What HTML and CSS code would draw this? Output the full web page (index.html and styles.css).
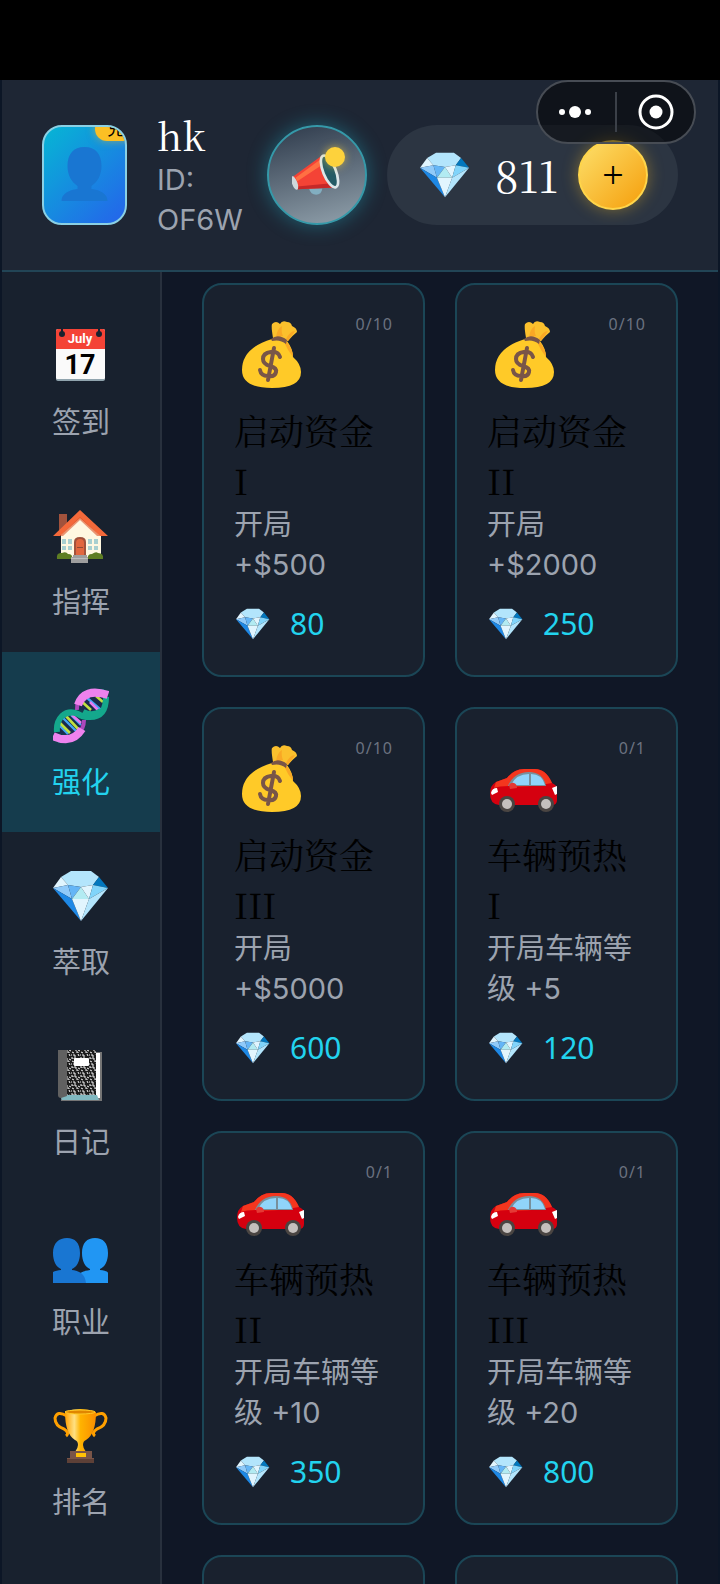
FILE: index.html
```html
<!DOCTYPE html>
<html lang="zh-CN">
<head>
  <meta charset="UTF-8">
  <meta name="viewport" content="width=device-width, initial-scale=1.0">
  <title>强化</title>
  <link rel="stylesheet" href="styles.css">
</head>
<body>
  <svg class="sprite" aria-hidden="true">
    <symbol id="diamond" viewBox="0 0 56 56">
      <path fill="#b3e5fc" d="M18 3h20l8 6-6 8-12 2-13-2-7-8z"/>
      <path fill="#e1f5fe" d="M8 9l7 8-15 3z"/>
      <path fill="#0277bd" d="M46 9l9 11-15-3z"/>
      <path fill="#90caf9" d="M0 20l15-3 4 14z"/>
      <path fill="#64b5f6" d="M15 17l13 2-9 12z"/>
      <path fill="#b2ebf2" d="M28 19l8 12H19z"/>
      <path fill="#e1f5fe" d="M28 19l12-2-4 14z"/>
      <path fill="#81d4fa" d="M40 17l15 3-19 11z"/>
      <path fill="#1e88e5" d="M0 20l19 11 9 22z"/>
      <path fill="#e1f5fe" d="M19 31h17l-8 22z"/>
      <path fill="#b3e5fc" d="M55 20L36 31l-8 22z"/>
    </symbol>
    <symbol id="moneybag" viewBox="-2 0 72 72">
      <path fill="#fbc02d" d="M37 19q-2-12-1-14 4-4 8 0 2-4 7-2 4 0 5 4 5 2 5 6-5 4-9 9z"/>
      <path fill="#f9a825" d="M40 18q1-8 6-11-1 6 1 10M50 20q4-8 9-8l-7 10z"/>
      <path fill="#ffca28" d="M36 20l15 2q6 8 6 16 8 7 8 15 0 16-29 16Q6 69 6 51q0-22 30-31z"/>
      <path fill="#f9a825" d="M50 22q7 8 7 16-5-6-9-15z"/>
      <path fill="#795548" d="M35 20q7-6 16 1l-1 4q-6-5-14-3z"/>
      <path d="M44 38q-2-6-9-5-8 1-8 7 0 5 7 7 7 2 6 6-1 5-8 4-7 0-8-6M38 29l-6 32" fill="none" stroke="#795548" stroke-width="4" stroke-linecap="round"/>
    </symbol>
    <symbol id="car" viewBox="0 0 72 72">
      <path fill="#d5000f" d="M3 51q0-9 6-12l11-4q7-9 17-9h11q11 0 17 14 5 2 5 6v11q0 5-5 5H12q-9-1-9-11z"/>
      <path fill="#f4361e" d="M9 39l11-4q7-9 17-9h11q11 0 17 14-25 5-43 3-10 0-15 2z"/>
      <path fill="#78909c" d="M21 43q6-14 21-14 14 0 17 14z"/>
      <path fill="#90d4fa" d="M24 42q5-11 18-11v11zM44 31q11 0 14 11H44z"/>
      <path fill="#e53935" d="M22 42q2-3 5-2t3 5l-7 1z"/>
      <path fill="#fff" d="M4 50q1-5 6-5l1 4-6 3zM70 43l-5 2 3 7 2-1z"/>
      <circle cx="20" cy="61" r="8" fill="#4a4542"/>
      <circle cx="59" cy="61" r="8" fill="#4a4542"/>
      <circle cx="20" cy="61" r="5" fill="#c5c0bd"/>
      <circle cx="59" cy="61" r="5" fill="#c5c0bd"/>
    </symbol>
  </svg>

  <div class="status-bar"></div>
  <div class="app">
    <header class="header">
      <div class="avatar">
        <svg viewBox="0 0 80 96" aria-hidden="true">
          <path fill="#1976d2" d="M40 20c11 0 17 7 17 19 0 9-4 16-10 20v3c9 1 16 5 16 12H17c0-7 7-11 16-12v-3c-6-4-10-11-10-20 0-12 6-19 17-19z"/>
        </svg>
        <span class="avatar-tag">兑</span>
      </div>
      <div class="user">
        <div class="user-name">hk</div>
        <div class="user-id">ID: OF6W</div>
      </div>
      <button class="notice" aria-label="公告">
        <svg viewBox="0 0 56 56" aria-hidden="true">
          <path fill="#82aec0" d="M19 43h15q-1 7-7 7t-8-7z"/>
          <path fill="#f44336" d="M34 6L1 30l5 14 42-2z"/>
          <path fill="#ff7043" d="M34 9L4 31l2 4 30-20z"/>
          <path fill="#c62828" d="M6 41l41-4 1 5-42 2z"/>
          <ellipse cx="3" cy="37" rx="3" ry="8" transform="rotate(-20 3 37)" fill="#cfd8dc"/>
          <ellipse cx="42" cy="24" rx="7" ry="19" transform="rotate(-22 42 24)" fill="#245b66" stroke="#dce7ea" stroke-width="3"/>
        </svg>
        <span class="notice-dot"></span>
      </button>
      <div class="gems">
        <svg class="gems-icon" aria-hidden="true"><use href="#diamond"/></svg>
        <span class="gems-count">811</span>
        <button class="gems-add">+</button>
      </div>
    </header>

    <div class="body">
      <nav class="sidebar">
        <button class="tab">
          <svg viewBox="0 0 56 56" aria-hidden="true">
            <rect x="3" y="1" width="49" height="51" rx="2" fill="#fafafa"/>
            <path d="M3 51h49q0 2-2 2H5q-2 0-2-2z" fill="#90a4ae"/>
            <path d="M5 1h45q2 0 2 2v18H3V3q0-2 2-2z" fill="#f44336"/>
            <path d="M9 0v6M46 0v6" stroke="#18212e" stroke-width="2"/>
            <circle cx="9" cy="6" r="3" fill="#18212e"/>
            <circle cx="46" cy="6" r="3" fill="#18212e"/>
            <text x="27" y="15" class="cal-month">July</text>
            <text x="27" y="46" class="cal-day">17</text>
          </svg>
          签到
        </button>
        <button class="tab">
          <svg viewBox="0 0 56 56" aria-hidden="true">
            <path fill="#a1523c" d="M6 6h8v16H6z"/>
            <path fill="#fff8e1" d="M27 7L8 25v24h40V25z"/>
            <path fill="#d8d0bd" d="M27 8l20 19v-5L27 5 8 22v5z"/>
            <path fill="#f4693a" d="M27 2L0 28h7L27 10l20 18h8z"/>
            <path fill="#d84315" d="M27 9L7 28h3l17-16 17 16h3z" opacity=".55"/>
            <path fill="#a8d0d0" d="M9 31h4v5H9zM15 31h4v5h-4zM9 38h4v4H9zM15 38h4v4h-4zM35 31h4v5h-4zM41 31h4v5h-4zM35 38h4v4h-4zM41 38h4v4h-4z"/>
            <path fill="#a1523c" d="M21 48V34q0-5 6-5t6 5v14z"/>
            <path fill="#e1673f" d="M23 47V35q0-4 4-4t4 4v12z"/>
            <path fill="#8d4a35" d="M24 39h6v1h-6z"/>
            <path fill="#5d7d22" d="M4 51q-1-7 5-6 4-2 6 1 5 0 4 5zM35 51q-1-5 4-5 4-3 6-1 6 0 5 6z"/>
            <path fill="#9e9e9e" d="M20 47h14v2h1v6H18v-6h2z"/>
            <path fill="#bdbdbd" d="M18 50h17v1H18z"/>
          </svg>
          指挥
        </button>
        <button class="tab active">
          <svg viewBox="0 0 56 56" aria-hidden="true">
            <path d="M5 53h7M43 3h8" stroke="#00796b" stroke-width="4"/>
            <path fill="#1a2b4d" d="M4 45q0-17 14-20l13 4q0 13-8 18zM25 21q0-10 8-13h18q0 14-9 17z"/>
            <path d="M5 36l10 10M9 29l15 15M18 27l10 10M33 9l15 13" stroke="#42a5f5" stroke-width="2.400"/>
            <path d="M13 28l14 15M6 34l11 11M26 11l12 11M43 8l7 6" stroke="#c0e040" stroke-width="2.600"/>
            <path d="M19 27l9 8M37 14l9 9" stroke="#e87bf0" stroke-width="2.600"/>
            <path d="M31 32q0 9-7 15M24 22q-1-11 9-17" stroke="#ab47bc" stroke-width="4" fill="none"/>
            <path d="M53 9q0 20-16 20-8 0-12-3-9-4-16 2-6 6-5 16" stroke="#14a88c" stroke-width="6" fill="none"/>
            <path d="M30 24q10 5 18-1" stroke="#14a88c" stroke-width="6" fill="none"/>
            <path d="M0 48q19 9 29-7M25 17Q31-1 55 7" stroke="#ee82ee" stroke-width="8" fill="none"/>
          </svg>
          强化
        </button>
        <button class="tab">
          <svg aria-hidden="true"><use href="#diamond"/></svg>
          萃取
        </button>
        <button class="tab">
          <svg viewBox="0 0 56 56" aria-hidden="true">
            <defs>
              <pattern id="speckle" width="9" height="9" patternUnits="userSpaceOnUse">
                <rect width="9" height="9" fill="#1c1c1c"/>
                <path d="M0 1h2v1M4 0v2h2M7 2l2 1M1 4l2 1M5 4h2v1M0 7h1M3 6v2h2M7 6l1 2" fill="none" stroke="#f5f5f5"/>
              </pattern>
            </defs>
            <path fill="#757575" d="M43 4h6v49H8v-4h35z"/>
            <path fill="#fff" d="M43 5h4v45h-4z"/>
            <path fill="#80b8c0" d="M7 47h37l2 5H9z"/>
            <path fill="#616161" d="M5 2h9v46l-6 2q-3 0-3-3z"/>
            <rect x="14" y="2" width="29" height="45" fill="url(#speckle)"/>
            <rect x="21" y="10" width="15" height="8" rx="1" fill="#fff"/>
          </svg>
          日记
        </button>
        <button class="tab">
          <svg viewBox="0 0 56 56" aria-hidden="true">
            <path fill="#2196f3" d="M42 10c8 0 13 5 13 15 0 8-3 14-8 16v1c5 0 8 2 8 3v10H26v-8c0-2 4-4 11-5v-1c-5-2-8-8-8-16 0-10 5-15 13-15z"/>
            <path fill="#1976d2" d="M14 10c8 0 13 5 13 15 0 8-3 14-8 16v1c8 1 13 4 14 13H0V44c2-1 5-2 8-2v-1c-5-2-8-8-8-16 0-10 6-15 14-15z"/>
          </svg>
          职业
        </button>
        <button class="tab">
          <svg viewBox="0 0 56 56" aria-hidden="true">
            <defs>
              <linearGradient id="gold" x1="0" x2="1">
                <stop offset="0" stop-color="#ffa000"/>
                <stop offset="0.3" stop-color="#ffe082"/>
                <stop offset="0.5" stop-color="#ffb300"/>
                <stop offset="1" stop-color="#f98d00"/>
              </linearGradient>
            </defs>
            <path d="M14 8Q4 2 2 10q0 8 9 11 6 4 2 7M41 8q10-6 12 2 0 8-9 11-6 4-2 7" fill="none" stroke="#ffa000" stroke-width="3"/>
            <path fill="url(#gold)" d="M12 4q15-6 31 0 0 22-10 28-3 1-3 5 0 3 3 7H22q3-4 3-7 0-4-3-5Q12 26 12 4z"/>
            <ellipse cx="27" cy="4" rx="15" ry="2" fill="#e08600" stroke="#ffca28"/>
            <path fill="#795548" d="M17 43h22v7h2v5H14v-5h3z"/>
            <path fill="#5d4037" d="M14 51h27v4H14z"/>
            <path fill="#ffc107" d="M23 45h10v4H23z"/>
          </svg>
          排名
        </button>
      </nav>

      <main class="cards">
        <article class="card">
          <span class="card-level">0/10</span>
          <svg class="card-icon" aria-hidden="true"><use href="#moneybag"/></svg>
          <h3>启动资金 I</h3>
          <p>开局<br>+$500</p>
          <div class="price"><svg aria-hidden="true"><use href="#diamond"/></svg>80</div>
        </article>
        <article class="card">
          <span class="card-level">0/10</span>
          <svg class="card-icon" aria-hidden="true"><use href="#moneybag"/></svg>
          <h3>启动资金 II</h3>
          <p>开局<br>+$2000</p>
          <div class="price"><svg aria-hidden="true"><use href="#diamond"/></svg>250</div>
        </article>
        <article class="card">
          <span class="card-level">0/10</span>
          <svg class="card-icon" aria-hidden="true"><use href="#moneybag"/></svg>
          <h3>启动资金 III</h3>
          <p>开局<br>+$5000</p>
          <div class="price"><svg aria-hidden="true"><use href="#diamond"/></svg>600</div>
        </article>
        <article class="card">
          <span class="card-level">0/1</span>
          <svg class="card-icon" aria-hidden="true"><use href="#car"/></svg>
          <h3>车辆预热 I</h3>
          <p>开局车辆等级 +5</p>
          <div class="price"><svg aria-hidden="true"><use href="#diamond"/></svg>120</div>
        </article>
        <article class="card">
          <span class="card-level">0/1</span>
          <svg class="card-icon" aria-hidden="true"><use href="#car"/></svg>
          <h3>车辆预热 II</h3>
          <p>开局车辆等级 +10</p>
          <div class="price"><svg aria-hidden="true"><use href="#diamond"/></svg>350</div>
        </article>
        <article class="card">
          <span class="card-level">0/1</span>
          <svg class="card-icon" aria-hidden="true"><use href="#car"/></svg>
          <h3>车辆预热 III</h3>
          <p>开局车辆等级 +20</p>
          <div class="price"><svg aria-hidden="true"><use href="#diamond"/></svg>800</div>
        </article>
        <article class="card"></article>
        <article class="card"></article>
      </main>
    </div>

    <div class="capsule">
      <button aria-label="更多">
        <svg viewBox="0 0 36 36" aria-hidden="true">
          <circle cx="3" cy="18" r="3" fill="#fff"/>
          <circle cx="16" cy="18" r="6" fill="#fff"/>
          <circle cx="29" cy="18" r="3" fill="#fff"/>
        </svg>
      </button>
      <button aria-label="关闭">
        <svg viewBox="0 0 36 36" aria-hidden="true">
          <circle cx="18" cy="18" r="16" fill="none" stroke="#fff" stroke-width="3"/>
          <circle cx="18" cy="18" r="6.500" fill="#fff"/>
        </svg>
      </button>
    </div>
  </div>
</body>
</html>
```
FILE: styles.css
```css
* {
  box-sizing: border-box;
}
body {
  margin: 0;
  height: 100vh;
  display: flex;
  flex-direction: column;
  overflow: hidden;
  background: #0c1626;
  font-family: Inter, "Noto Sans CJK SC", sans-serif;
  font-size: 29px;
}
button {
  border: none;
  padding: 0;
  background: none;
  font: inherit;
  cursor: pointer;
}
svg {
  display: block;
  flex-shrink: 0;
}
.sprite {
  position: absolute;
  width: 0;
  height: 0;
}
.cal-month {
  font: bold 13px Roboto, sans-serif;
  fill: #fff;
  text-anchor: middle;
}
.cal-day {
  font: bold 27px Roboto, sans-serif;
  fill: #000;
  text-anchor: middle;
}
.status-bar {
  height: 80px;
  flex-shrink: 0;
  background: #000;
}
.app {
  position: relative;
  flex: 1;
  min-height: 0;
  margin: 0 2px;
  display: flex;
  flex-direction: column;
}

/* header */
.header {
  display: flex;
  align-items: center;
  flex-shrink: 0;
  padding: 30px 40px;
  background: #1e2634;
  border-bottom: 2px solid #224556;
}
.avatar {
  position: relative;
  width: 85px;
  height: 100px;
  border: 2px solid #8bd0e4;
  border-radius: 20px;
  overflow: hidden;
  background: linear-gradient(135deg, #06b6d4, #2563eb);
}
.avatar svg {
  width: 100%;
  height: 100%;
}
.avatar-tag {
  position: absolute;
  top: -10px;
  right: -10px;
  width: 40px;
  padding-left: 12px;
  border-radius: 14px;
  background: #fbbf24;
  box-shadow: 0 0 8px rgba(251, 191, 36, 0.5);
  color: #000;
  font-size: 18px;
  line-height: 24px;
}
.user {
  flex: 1;
  min-width: 0;
  margin: 0 20px 0 30px;
}
.user-name {
  color: #fff;
  font-family: "Noto Serif CJK SC", "Liberation Serif", serif;
  font-size: 38px;
  line-height: 50px;
}
.user-id {
  color: #9ca3af;
  line-height: 40px;
}
.notice {
  position: relative;
  display: flex;
  align-items: center;
  justify-content: center;
  width: 100px;
  height: 100px;
  border: 2px solid #3599a9;
  border-radius: 50%;
  background: linear-gradient(165deg, #2e3a4b, #91a1ac);
  box-shadow: 0 0 20px rgba(34, 211, 238, 0.35);
}
.notice svg {
  width: 50px;
  height: 50px;
}
.notice-dot {
  position: absolute;
  top: 20px;
  right: 20px;
  width: 20px;
  height: 20px;
  border-radius: 50%;
  background: #fdd23c;
  box-shadow: 0 0 8px rgba(253, 210, 60, 0.6);
}
.gems {
  display: flex;
  align-items: center;
  height: 100px;
  margin-left: 20px;
  padding: 0 30px 0 33px;
  border-radius: 50px;
  background: #2c3542;
}
.gems-icon {
  width: 50px;
  height: 50px;
}
.gems-count {
  margin: 0 20px 0 25px;
  color: #fff;
  font-family: "Noto Serif CJK SC", "Liberation Serif", serif;
  font-size: 42px;
}
.gems-add {
  width: 70px;
  height: 70px;
  border: 2px solid #ffd54a;
  border-radius: 50%;
  background: linear-gradient(135deg, #fde06a, #f59e0b);
  box-shadow: 0 0 16px rgba(251, 191, 36, 0.4);
  color: #000;
  font-family: "Liberation Serif", serif;
  font-size: 38px;
}

/* mini program capsule */
.capsule {
  position: absolute;
  top: 0;
  right: 22px;
  width: 160px;
  height: 64px;
  display: flex;
  align-items: center;
  border: 2px solid #474c54;
  border-radius: 32px;
  background: rgba(0, 0, 0, 0.5);
}
.capsule button {
  flex: 1;
  display: flex;
  justify-content: center;
}
.capsule button + button {
  border-left: 2px solid #3b4048;
  padding: 2px 0;
}
.capsule svg {
  width: 36px;
  height: 36px;
}

/* layout */
.body {
  flex: 1;
  min-height: 0;
  display: flex;
}
.sidebar {
  width: 160px;
  flex-shrink: 0;
  padding-top: 20px;
  background: #18212e;
  border-right: 2px solid #28303d;
}
.tab {
  display: flex;
  flex-direction: column;
  align-items: center;
  width: 100%;
  height: 180px;
  padding-top: 36px;
  color: #9ca3af;
  line-height: 42px;
}
.tab svg {
  width: 56px;
  height: 56px;
  margin-bottom: 18px;
}
.tab.active {
  background: #153c4d;
  color: #22d3ee;
}
.cards {
  flex: 1;
  min-width: 0;
  display: grid;
  grid-template-columns: 1fr 1fr;
  grid-auto-rows: min-content;
  gap: 30px;
  padding: 11px 40px;
  overflow: hidden;
  background: #101726;
}
.card {
  position: relative;
  min-height: 394px;
  padding: 30px;
  border: 2px solid #1b4656;
  border-radius: 20px;
  background: #19212e;
}
.card-level {
  position: absolute;
  top: 29px;
  right: 30px;
  color: #6b7280;
  font-family: "Noto Sans", sans-serif;
  font-size: 16px;
  line-height: 20px;
  letter-spacing: 1px;
}
.card-icon {
  width: 72px;
  height: 72px;
  margin: 4px 0 14px;
}
.card h3 {
  margin: 0;
  color: #000;
  font-family: "Noto Serif CJK SC", "Liberation Serif", serif;
  font-size: 35px;
  font-weight: 400;
  line-height: 50px;
}
.card p {
  margin: 0 0 18px;
  color: #9ca3af;
  line-height: 40px;
}
.price {
  display: flex;
  align-items: center;
  gap: 20px;
  padding-left: 2px;
  color: #22d3ee;
  font-family: "Noto Sans", sans-serif;
  font-size: 30px;
  line-height: 42px;
}
.price svg {
  width: 34px;
  height: 34px;
}
```
